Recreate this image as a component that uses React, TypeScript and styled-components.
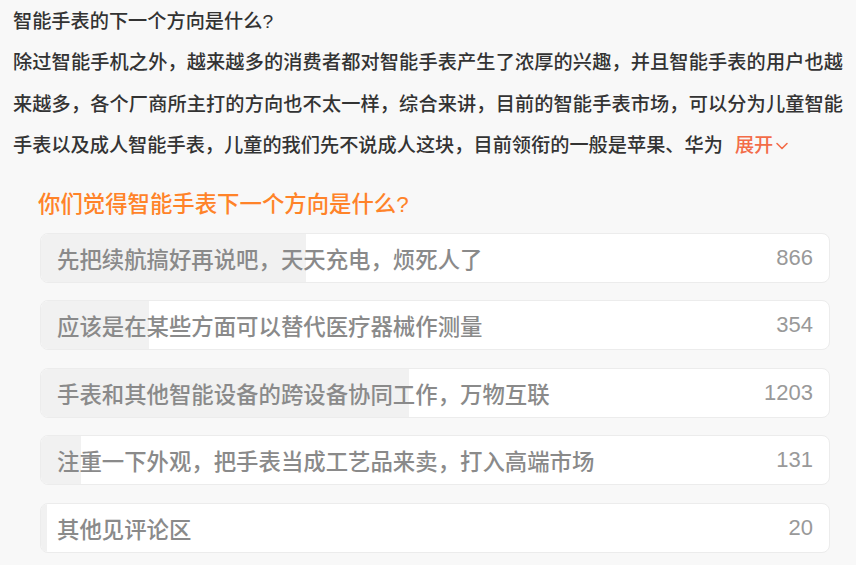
import React from 'react'
import styled, { createGlobalStyle } from 'styled-components'

const GlobalStyle = createGlobalStyle`
  html, body {
    margin: 0;
    padding: 0;
    background: #f8f8f8;
  }
  body {
    font-family: "Liberation Sans", "Noto Sans CJK SC", sans-serif;
  }
`

const Page = styled.div`
  width: 856px;
  height: 565px;
  overflow: hidden;
  box-sizing: border-box;
  padding: 1px 13px 0 13px;
  background: #f8f8f8;
`

const Heading = styled.div`
  font-size: 19.2px;
  line-height: 41px;
  font-weight: 500;
  color: #333333;
`

const Paragraph = styled.p`
  margin: 0;
  font-size: 19.2px;
  line-height: 41.5px;
  font-weight: 500;
  color: #333333;
  text-align: justify;
`

const Expand = styled.span`
  display: inline-flex;
  align-items: center;
  gap: 2px;
  margin-left: 12px;
  color: #f36c48;
  cursor: pointer;
`

const Poll = styled.div`
  margin: 23px 13px 0 27px;
`

const PollTitle = styled.div`
  font-size: 22.4px;
  line-height: 30px;
  font-weight: 500;
  color: #ff8329;
  margin-bottom: 13px;
  margin-left: -2px;
`

const OptionList = styled.div`
  display: flex;
  flex-direction: column;
  gap: 17.5px;
`

const Option = styled.div`
  position: relative;
  height: 50px;
  box-sizing: border-box;
  border: 1px solid #ececec;
  border-radius: 8px;
  background: #ffffff;
  overflow: hidden;
  display: flex;
  align-items: center;
  justify-content: space-between;
  padding: 0 16px;
  font-size: 22.4px;
  font-weight: 500;
  color: #8a8a8a;
`

const Fill = styled.div`
  position: absolute;
  left: 0;
  top: 0;
  bottom: 0;
  background: #f1f1f1;
`

const Label = styled.span`
  position: relative;
`

const Count = styled.span`
  position: relative;
  color: #999999;
  font-size: 22px;
  font-weight: 400;
`

const options = [
  { text: '先把续航搞好再说吧，天天充电，烦死人了', votes: 866 },
  { text: '应该是在某些方面可以替代医疗器械作测量', votes: 354 },
  { text: '手表和其他智能设备的跨设备协同工作，万物互联', votes: 1203 },
  { text: '注重一下外观，把手表当成工艺品来卖，打入高端市场', votes: 131 },
  { text: '其他见评论区', votes: 20 },
]

const total = options.reduce((s, o) => s + o.votes, 0)

const Chevron = () => (
  <svg width="14" height="14" viewBox="0 0 14 14" fill="none">
    <path d="M2 4.5 L7 9.5 L12 4.5" stroke="#f36c48" strokeWidth="1.6" strokeLinecap="round" strokeLinejoin="round" />
  </svg>
)

const App = () => {
  return (
    <Page>
      <GlobalStyle />
      <Heading>智能手表的下一个方向是什么?</Heading>
      <Paragraph>
        除过智能手机之外，越来越多的消费者都对智能手表产生了浓厚的兴趣，并且智能手表的用户也越来越多，各个厂商所主打的方向也不太一样，综合来讲，目前的智能手表市场，可以分为儿童智能手表以及成人智能手表，儿童的我们先不说成人这块，目前领衔的一般是苹果、华为
        <Expand>
          展开<Chevron />
        </Expand>
      </Paragraph>
      <Poll>
        <PollTitle>你们觉得智能手表下一个方向是什么?</PollTitle>
        <OptionList>
          {options.map((o) => (
            <Option key={o.text}>
              <Fill style={{ width: `${(o.votes / total) * 100}%` }} />
              <Label>{o.text}</Label>
              <Count>{o.votes}</Count>
            </Option>
          ))}
        </OptionList>
      </Poll>
    </Page>
  )
}

export default App
